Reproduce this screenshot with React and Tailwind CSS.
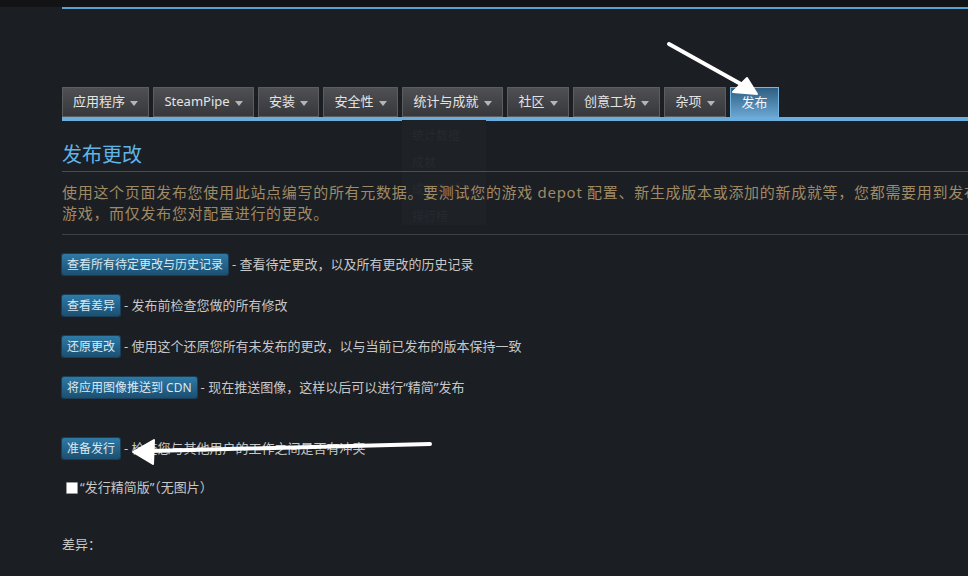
const tabs = [
  { label: "应用程序", w: "w-[87px]" },
  { label: "SteamPipe", w: "w-[101px]" },
  { label: "安装", w: "w-[61px]" },
  { label: "安全性", w: "w-[75px]" },
  { label: "统计与成就", w: "w-[101px]" },
  { label: "社区", w: "w-[62px]" },
  { label: "创意工坊", w: "w-[87px]" },
  { label: "杂项", w: "w-[62px]" },
];

const actions = [
  { btn: "查看所有待定更改与历史记录", text: "- 查看待定更改，以及所有更改的历史记录" },
  { btn: "查看差异", text: "- 发布前检查您做的所有修改" },
  { btn: "还原更改", text: "- 使用这个还原您所有未发布的更改，以与当前已发布的版本保持一致" },
  { btn: "将应用图像推送到 CDN", text: "- 现在推送图像，这样以后可以进行“精简”发布" },
];

const Caret = () => (
  <svg width="8" height="5" viewBox="0 0 8 5" className="ml-[5px] mt-[2px]">
    <path d="M0 0h8L4 5z" fill="#b5b5b5" />
  </svg>
);

const BlueButton = ({ children }) => (
  <span className="inline-block rounded-[2px] bg-gradient-to-b from-[#2e7aa6] to-[#1c4f72] px-[5px] py-[2px] text-[12px] leading-[17px] text-[#dbe9f2] shadow-[0_0_0_1px_#1a3e58]">
    {children}
  </span>
);

export default function App() {
  return (
    <div
      className="relative h-[576px] w-[968px] overflow-hidden bg-[#1b1e23]"
      style={{ fontFamily: '"Noto Sans", "Noto Sans CJK SC", sans-serif' }}
    >
      <div className="h-[7px] bg-[#121315]" />
      <div className="ml-[62px] h-[2px] bg-[#5aa2d2]" />

      <div className="ml-[62px] mt-[78px]">
        <div className="flex gap-[4px]">
          {tabs.map((t) => (
            <div
              key={t.label}
              className={`${t.w} flex h-[30px] shrink-0 items-center justify-center border border-[#5c5d5f] bg-gradient-to-b from-[#4f5053] to-[#37383b] text-[13px] text-[#e4e4e4]`}
            >
              {t.label}
              <Caret />
            </div>
          ))}
          <div className="flex h-[30px] w-[49px] shrink-0 items-center justify-center border border-b-0 border-[#76b6e2] bg-gradient-to-b from-[#2f5f82] to-[#6aa7d3] text-[13px] text-[#eef6fb]">
            发布
          </div>
        </div>
        <div className="h-[4px] bg-[#6aaee0]" />
      </div>

      {/* faint dropdown behind content */}
      <div className="absolute left-[402px] top-[120px] h-[105px] w-[84px] bg-[#1e2126] pl-[10px] pt-[2px] text-[12px] leading-[27px] text-[#272a30]">
        <div>统计数据</div>
        <div>成就</div>
        <div>成就测试</div>
        <div>排行榜</div>
      </div>

      <div className="relative ml-[62px] mt-[21px]">
        <h1 className="text-[20px] leading-[26px] text-[#5fb4e8]">发布更改</h1>
        <div className="mt-[3px] h-px bg-[#4a4d52]" />
        <p className="mt-[10px] whitespace-nowrap text-[15px] leading-[21px] tracking-[0.7px] text-[#a08a64]">
          使用这个页面发布您使用此站点编写的所有元数据。要测试您的游戏 depot 配置、新生成版本或添加的新成就等，您都需要用到发布
          <br />
          游戏，而仅发布您对配置进行的更改。
        </p>
        <div className="mt-[10px] h-px bg-[#3d4046]" />

        <div className="mt-[19px] flex flex-col gap-[20px]">
          {actions.map((a) => (
            <div key={a.btn} className="flex items-center gap-[4px] text-[13px] text-[#c7c7c7]">
              <BlueButton>{a.btn}</BlueButton>
              <span>{a.text}</span>
            </div>
          ))}
        </div>

        <div className="mt-[40px] flex items-center gap-[4px] text-[13px] text-[#c7c7c7]">
          <BlueButton>准备发行</BlueButton>
          <span>- 检查您与其他用户的工作之间是否有冲突</span>
        </div>

        <label className="ml-[4px] mt-[19px] flex items-center text-[13px] text-[#c7c7c7]">
          <span className="mr-[2px] inline-block h-[12px] w-[12px] rounded-[1px] border border-[#999] bg-white" />
          “发行精简版”（无图片）
        </label>

        <div className="mt-[37px] text-[13px] text-[#c7c7c7]">差异：</div>
      </div>

      {/* annotation arrows */}
      <svg className="pointer-events-none absolute left-0 top-0" width="968" height="576">
        <g stroke="white" strokeWidth="4" strokeLinecap="round" fill="none">
          <line x1="669" y1="44" x2="748" y2="88" />
          <line x1="430" y1="444" x2="150" y2="451" />
        </g>
        <path d="M757 94 L733 92 L747 78 Z" fill="white" stroke="white" strokeWidth="2" strokeLinejoin="round" />
        <path d="M133 452 L154 440 L153 464 Z" fill="white" stroke="white" strokeWidth="2" strokeLinejoin="round" />
      </svg>
    </div>
  );
}
